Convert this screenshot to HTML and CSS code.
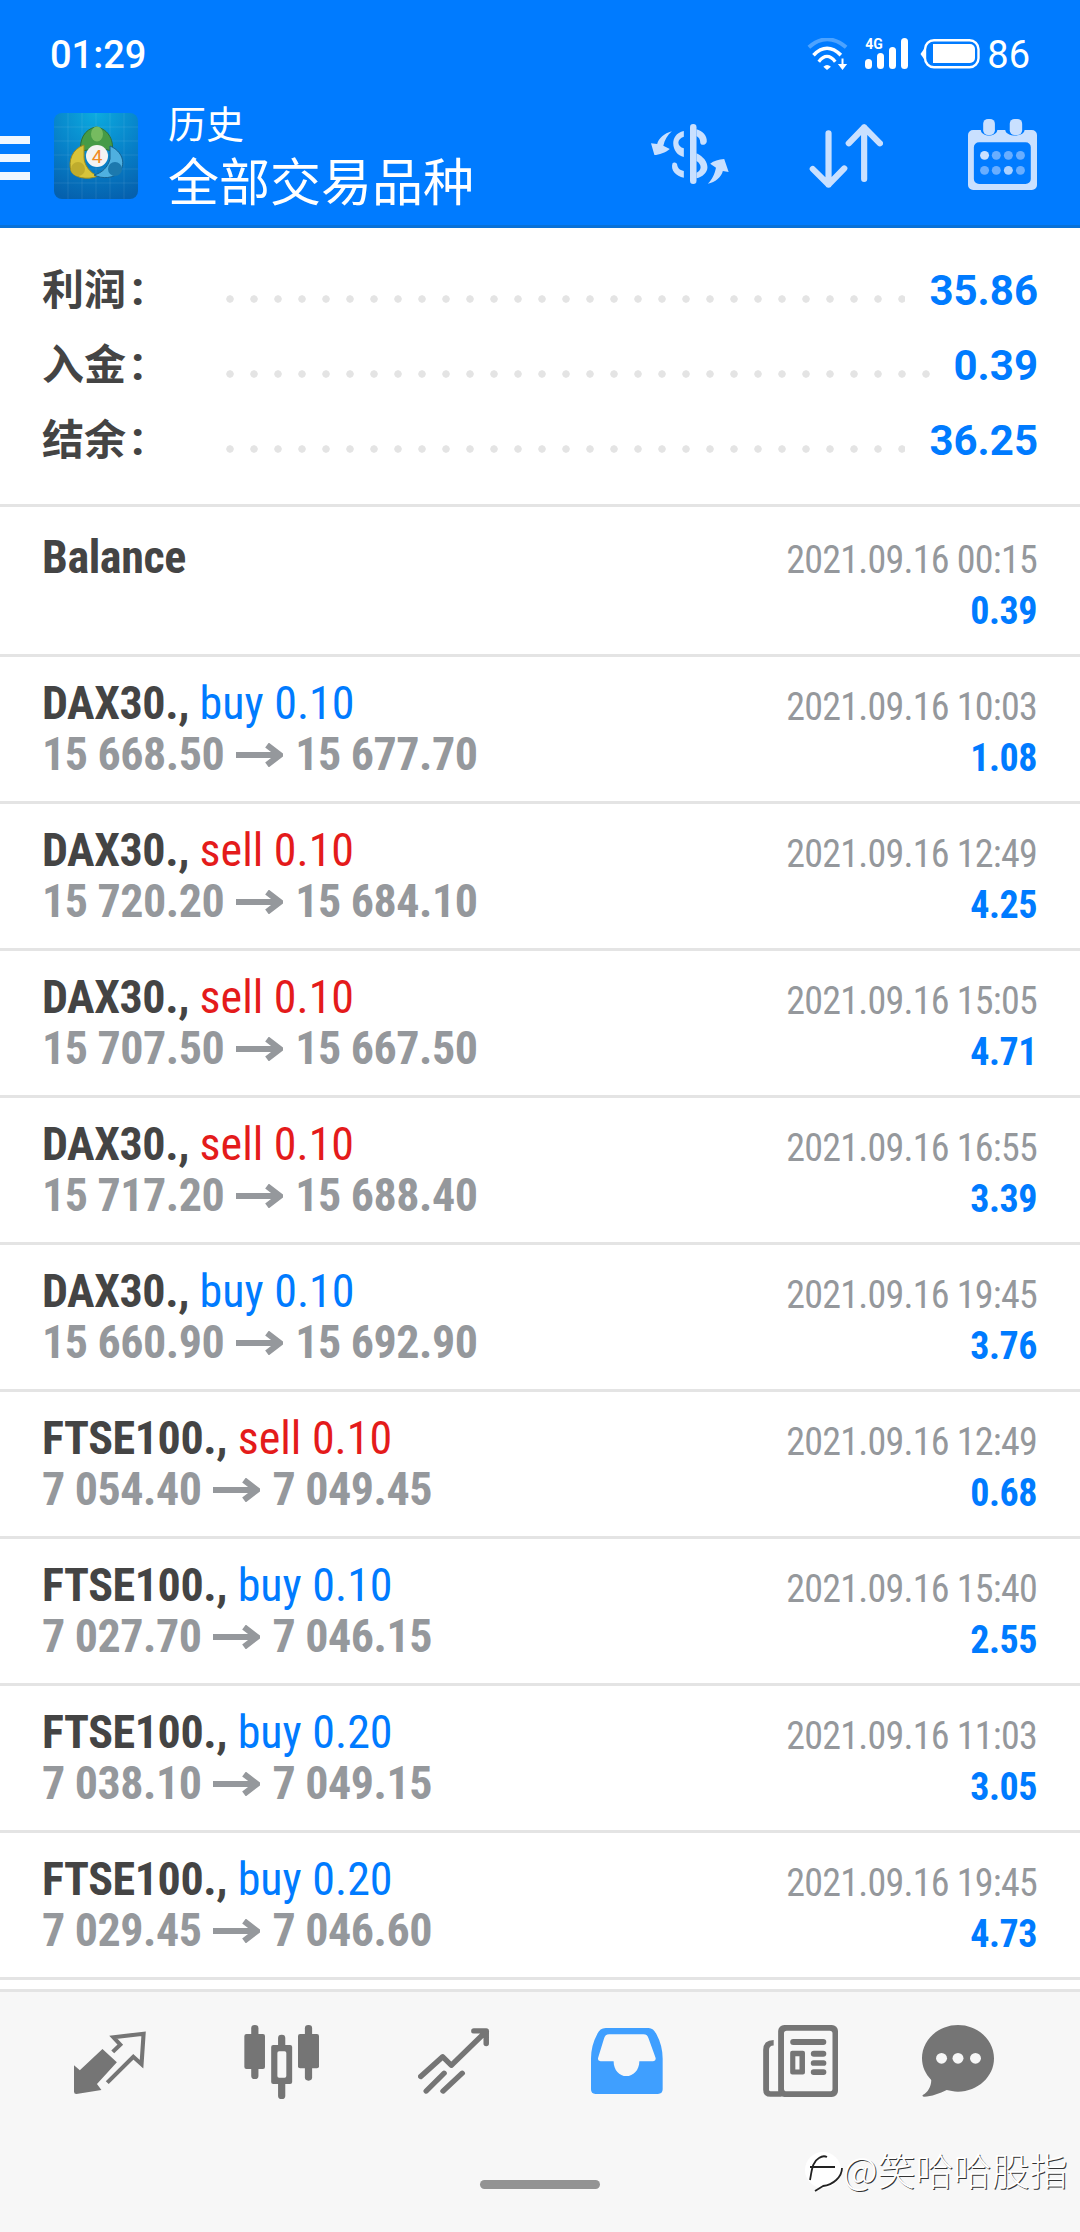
FILE: index.html
```html
<!DOCTYPE html>
<html lang="en">
<head>
    <meta charset="UTF-8">
    <title>历史</title>
    <link rel="stylesheet" href="styles.css">
</head>
<body>
<div class="screen">
    <header class="top">
        <div class="status">
            <span class="clock">01:29</span>
            <div class="status-right">
                <svg class="wifi" width="41" height="32" viewBox="35 38 123 97">
                    <path d="M40 66 Q95 18 153 66" fill="none" stroke="#fff" stroke-opacity=".3" stroke-width="12"/>
                    <path d="M54 90 Q95 48 137 90" fill="none" stroke="#fff" stroke-width="11"/>
                    <path d="M70 110 Q95 78 120 110" fill="none" stroke="#fff" stroke-width="10"/>
                    <path d="M84 125 Q95 114 107 125 L95 135Z" fill="#fff"/>
                    <path d="M139 100h6v17h11l-14 18-14-18h11z" fill="#fff"/>
                </svg>
                <div class="signal">
                    <span class="four-g">4G</span>
                    <svg width="44" height="32" viewBox="0 0 44 32">
                        <rect x="0" y="21" width="7" height="10" rx="3.500" fill="#fff"/>
                        <rect x="12" y="15" width="7" height="16" rx="3.500" fill="#fff"/>
                        <rect x="24" y="9" width="7" height="22" rx="3.500" fill="#fff"/>
                        <rect x="36" y="0" width="7" height="31" rx="3.500" fill="#fff"/>
                    </svg>
                </div>
                <svg class="battery" width="60" height="30" viewBox="0 0 60 30">
                    <path d="M4 10 L0.500 15 L4 20Z" fill="#fff"/>
                    <rect x="5" y="1.200" width="53.500" height="27" rx="9" fill="none" stroke="#fff" stroke-width="2.400"/>
                    <path d="M13 5 H50 a5 5 0 0 1 5 5 V19 a5 5 0 0 1 -5 5 H13Z" fill="#fff"/>
                </svg>
                <span class="level">86</span>
            </div>
        </div>
        <div class="appbar">
            <div class="burger"><i></i><i></i><i></i></div>
            <svg class="logo" width="84" height="86" viewBox="0 0 84 86">
                <defs>
                    <radialGradient id="logo-bg" cx="50%" cy="0%" r="105%">
                        <stop offset="0" stop-color="#0cabdf"/>
                        <stop offset=".55" stop-color="#0780c8"/>
                        <stop offset="1" stop-color="#0560ad"/>
                    </radialGradient>
                </defs>
                <rect width="84" height="86" rx="8" fill="url(#logo-bg)"/>
                <path d="M14 0V86M28 0V86M42 0V86M56 0V86M70 0V86M0 14H84M0 28H84M0 42H84M0 56H84M0 70H84" stroke="#fff" stroke-opacity=".09" stroke-width="1"/>
                <path d="M42 14 C56 16 60 30 58 38 L50 36 C47 33 37 33 34 37 L27 38 C25 28 30 16 42 14Z" fill="#469b46" stroke="#2f6f35" stroke-width="1"/>
                <ellipse cx="43" cy="21" rx="6" ry="7.500" fill="#76bb60"/>
                <path d="M30 32 C18 36 14 48 17 58 C20 64 32 68 44 63 C36 60 30 52 30 44Z" fill="#d8c43a" stroke="#9c8c1f" stroke-width="1"/>
                <circle cx="24" cy="56" r="7" fill="#bfac2d"/>
                <path d="M56 33 C68 38 72 50 66 58 C60 66 48 66 40 62 C48 60 54 54 56 46Z" fill="#4fb0e0" stroke="#17618f" stroke-width="1"/>
                <circle cx="61" cy="56" r="7" fill="#1c79ae"/>
                <circle cx="43" cy="43" r="11" fill="#f3f3f3"/>
                <text class="logo-num" x="43" y="50">4</text>
            </svg>
            <div class="titles">
                <div class="title-small">历史</div>
                <div class="title-big">全部交易品种</div>
            </div>
            <div class="actions">
                <svg class="act-dollar" width="78" height="60" viewBox="322 372 228 180" preserveAspectRatio="none">
                    <rect x="436" y="372" width="19" height="180" rx="9.500" fill="#c9e0ff"/>
                    <path d="M418 393 C395 398 387 415 387 430 C387 450 400 468 418 471 V445 C408 442 402 435 402 428 C402 420 408 413 418 410Z" fill="#c9e0ff"/>
                    <path d="M455 388 C472 392 487 408 485 425 C483 436 468 438 466 428 C466 418 462 412 455 408Z" fill="#c9e0ff"/>
                    <path d="M455 460 C475 470 487 485 487 502 C487 518 472 532 455 535Z M455 483 V518 C462 515 467 510 467 502 C467 495 463 488 455 483Z" fill="#c9e0ff" fill-rule="evenodd"/>
                    <path d="M385 490 C378 510 395 530 418 533 V513 C405 510 400 505 398 492 C395 487 388 486 385 490Z" fill="#c9e0ff"/>
                    <path d="M383 394 C360 400 345 415 340 432 L322 430 L332 465 C345 465 365 458 377 447 L358 437 C362 420 370 405 383 394Z" fill="#c9e0ff"/>
                    <path d="M488 551 C510 548 528 530 532 513 L549 516 L536 477 C520 478 505 483 495 491 L512 503 C508 522 500 540 488 551Z" fill="#c9e0ff"/>
                </svg>
                <svg class="act-sort" width="74" height="64" viewBox="780 370 216 192" preserveAspectRatio="none">
                    <path d="M837 398 V552 M791 505 L837 552 L883 503" fill="none" stroke="#c9e0ff" stroke-width="18" stroke-linecap="round" stroke-linejoin="round"/>
                    <path d="M941 535 V380 M896 428 L941 380 L987 428" fill="none" stroke="#c9e0ff" stroke-width="18" stroke-linecap="round" stroke-linejoin="round"/>
                </svg>
                <svg class="act-cal" width="69" height="71" viewBox="1243 357 200 213" preserveAspectRatio="none">
                    <path d="M1258 390 H1280 C1282 412 1326 412 1328 390 H1351 C1353 412 1405 412 1407 390 H1428 a15 15 0 0 1 15 15 V555 a15 15 0 0 1 -15 15 H1258 a15 15 0 0 1 -15 -15 V405 a15 15 0 0 1 15 -15Z M1275 427 a15 15 0 0 0 -15 15 V537 a15 15 0 0 0 15 15 H1410 a15 15 0 0 0 15 -15 V442 a15 15 0 0 0 -15 -15Z" fill="#c9e0ff" fill-rule="evenodd"/>
                    <rect x="1287" y="357" width="34" height="48" rx="14" fill="#c9e0ff"/>
                    <rect x="1364" y="357" width="36" height="48" rx="14" fill="#c9e0ff"/>
                    <circle cx="1291" cy="466" r="13" fill="#c9e0ff"/>
                    <circle cx="1325" cy="466" r="13" fill="#69aeff"/>
                    <circle cx="1360" cy="466" r="13" fill="#69aeff"/>
                    <circle cx="1395" cy="466" r="13" fill="#69aeff"/>
                    <circle cx="1291" cy="511" r="13" fill="#69aeff"/>
                    <circle cx="1325" cy="511" r="13" fill="#69aeff"/>
                    <circle cx="1360" cy="511" r="13" fill="#c9e0ff" fill-opacity=".85"/>
                    <circle cx="1395" cy="511" r="13" fill="#69aeff"/>
                </svg>
            </div>
        </div>
    </header>

    <section class="summary">
        <div class="sum-row"><span class="sum-label">利润<span class="colon">:</span></span><span class="dots"></span><span class="sum-val">35.86</span></div>
        <div class="sum-row"><span class="sum-label">入金<span class="colon">:</span></span><span class="dots"></span><span class="sum-val">0.39</span></div>
        <div class="sum-row"><span class="sum-label">结余<span class="colon">:</span></span><span class="dots"></span><span class="sum-val">36.25</span></div>
    </section>

    <div class="list">
        <div class="row row-balance">
            <div class="row-left"><span class="sym">Balance</span></div>
            <div class="row-right"><span class="when">2021.09.16 00:15</span><span class="pl">0.39</span></div>
        </div>
        <div class="row">
            <div class="row-left"><div><span class="sym">DAX30.,</span> <span class="buy">buy 0.10</span></div><div class="prices"><span>15 668.50</span><svg class="arr" width="47" height="24" viewBox="0 0 47 24"><path d="M0 12 H44 M31 2 L44 12 L31 22" fill="none" stroke="#95989c" stroke-width="6"/></svg><span>15 677.70</span></div></div>
            <div class="row-right"><span class="when">2021.09.16 10:03</span><span class="pl">1.08</span></div>
        </div>
        <div class="row">
            <div class="row-left"><div><span class="sym">DAX30.,</span> <span class="sell">sell 0.10</span></div><div class="prices"><span>15 720.20</span><svg class="arr" width="47" height="24" viewBox="0 0 47 24"><path d="M0 12 H44 M31 2 L44 12 L31 22" fill="none" stroke="#95989c" stroke-width="6"/></svg><span>15 684.10</span></div></div>
            <div class="row-right"><span class="when">2021.09.16 12:49</span><span class="pl">4.25</span></div>
        </div>
        <div class="row">
            <div class="row-left"><div><span class="sym">DAX30.,</span> <span class="sell">sell 0.10</span></div><div class="prices"><span>15 707.50</span><svg class="arr" width="47" height="24" viewBox="0 0 47 24"><path d="M0 12 H44 M31 2 L44 12 L31 22" fill="none" stroke="#95989c" stroke-width="6"/></svg><span>15 667.50</span></div></div>
            <div class="row-right"><span class="when">2021.09.16 15:05</span><span class="pl">4.71</span></div>
        </div>
        <div class="row">
            <div class="row-left"><div><span class="sym">DAX30.,</span> <span class="sell">sell 0.10</span></div><div class="prices"><span>15 717.20</span><svg class="arr" width="47" height="24" viewBox="0 0 47 24"><path d="M0 12 H44 M31 2 L44 12 L31 22" fill="none" stroke="#95989c" stroke-width="6"/></svg><span>15 688.40</span></div></div>
            <div class="row-right"><span class="when">2021.09.16 16:55</span><span class="pl">3.39</span></div>
        </div>
        <div class="row">
            <div class="row-left"><div><span class="sym">DAX30.,</span> <span class="buy">buy 0.10</span></div><div class="prices"><span>15 660.90</span><svg class="arr" width="47" height="24" viewBox="0 0 47 24"><path d="M0 12 H44 M31 2 L44 12 L31 22" fill="none" stroke="#95989c" stroke-width="6"/></svg><span>15 692.90</span></div></div>
            <div class="row-right"><span class="when">2021.09.16 19:45</span><span class="pl">3.76</span></div>
        </div>
        <div class="row">
            <div class="row-left"><div><span class="sym">FTSE100.,</span> <span class="sell">sell 0.10</span></div><div class="prices"><span>7 054.40</span><svg class="arr" width="47" height="24" viewBox="0 0 47 24"><path d="M0 12 H44 M31 2 L44 12 L31 22" fill="none" stroke="#95989c" stroke-width="6"/></svg><span>7 049.45</span></div></div>
            <div class="row-right"><span class="when">2021.09.16 12:49</span><span class="pl">0.68</span></div>
        </div>
        <div class="row">
            <div class="row-left"><div><span class="sym">FTSE100.,</span> <span class="buy">buy 0.10</span></div><div class="prices"><span>7 027.70</span><svg class="arr" width="47" height="24" viewBox="0 0 47 24"><path d="M0 12 H44 M31 2 L44 12 L31 22" fill="none" stroke="#95989c" stroke-width="6"/></svg><span>7 046.15</span></div></div>
            <div class="row-right"><span class="when">2021.09.16 15:40</span><span class="pl">2.55</span></div>
        </div>
        <div class="row">
            <div class="row-left"><div><span class="sym">FTSE100.,</span> <span class="buy">buy 0.20</span></div><div class="prices"><span>7 038.10</span><svg class="arr" width="47" height="24" viewBox="0 0 47 24"><path d="M0 12 H44 M31 2 L44 12 L31 22" fill="none" stroke="#95989c" stroke-width="6"/></svg><span>7 049.15</span></div></div>
            <div class="row-right"><span class="when">2021.09.16 11:03</span><span class="pl">3.05</span></div>
        </div>
        <div class="row">
            <div class="row-left"><div><span class="sym">FTSE100.,</span> <span class="buy">buy 0.20</span></div><div class="prices"><span>7 029.45</span><svg class="arr" width="47" height="24" viewBox="0 0 47 24"><path d="M0 12 H44 M31 2 L44 12 L31 22" fill="none" stroke="#95989c" stroke-width="6"/></svg><span>7 046.60</span></div></div>
            <div class="row-right"><span class="when">2021.09.16 19:45</span><span class="pl">4.73</span></div>
        </div>
    </div>

    <nav class="tabs">
        <div class="tab-icons">
            <svg class="tab-trade" width="72" height="63" viewBox="215 212 210 190" preserveAspectRatio="none">
                <path d="M215 315 L232 330 L298 266 L340 306 L282 372 L295 390 L222 402 Q215 402 215 395Z" fill="#757575"/>
                <path d="M328 275 L350 253 L330 231 L418 220 L412 312 L388 290 L312 368" fill="none" stroke="#757575" stroke-width="12"/>
            </svg>
            <svg class="tab-chart" width="75" height="74" viewBox="708 195 218 222" preserveAspectRatio="none">
                <rect x="729" y="195" width="21" height="162" rx="10" fill="#757575"/>
                <rect x="709" y="222" width="60" height="105" rx="6" fill="#757575"/>
                <rect x="807" y="224" width="21" height="193" rx="10" fill="#757575"/>
                <rect x="787" y="255" width="61" height="117" rx="6" fill="#757575"/>
                <rect x="805" y="274" width="26" height="79" rx="5" fill="#f7f7f7"/>
                <rect x="885" y="195" width="21" height="167" rx="10" fill="#757575"/>
                <rect x="865" y="222" width="61" height="103" rx="6" fill="#757575"/>
            </svg>
            <svg class="tab-trend" width="72" height="66" viewBox="1213 203 210 200" preserveAspectRatio="none">
                <path d="M1221 350 L1285 290 L1310 316 L1412 213 M1376 212 H1412 V250" fill="none" stroke="#757575" stroke-width="16" stroke-linecap="round" stroke-linejoin="round"/>
                <path d="M1237 394 L1289 340 M1286 394 L1342 340" fill="none" stroke="#757575" stroke-width="16" stroke-linecap="round"/>
            </svg>
            <svg class="tab-history" width="72" height="66" viewBox="147 203 210 199" preserveAspectRatio="none">
                <path d="M190 203 H315 C325 203 332 210 338 222 C350 245 356 270 356 295 V388 Q356 402 342 402 H160 Q147 402 147 388 V295 C147 270 153 245 165 222 C170 210 178 203 190 203Z M200 222 Q188 222 185 235 L168 292 Q165 303 175 303 H213 C213 330 230 348 250 348 C270 348 288 330 288 303 H328 Q338 303 335 292 L315 235 Q312 222 300 222Z" fill="#3f9fff" fill-rule="evenodd"/>
            </svg>
            <svg class="tab-news" width="75" height="72" viewBox="646 195 218 215" preserveAspectRatio="none">
                <path d="M708 195 H846 a18 18 0 0 1 18 18 V392 a18 18 0 0 1 -18 18 H708 a18 18 0 0 1 -18 -18 V213 a18 18 0 0 1 18 -18Z M715 212 a8 8 0 0 0 -8 8 V385 a8 8 0 0 0 8 8 H840 a8 8 0 0 0 8 -8 V220 a8 8 0 0 0 -8 -8Z" fill="#757575" fill-rule="evenodd"/>
                <path d="M677 248 Q655 248 655 270 V388 Q655 401 668 401 H700" fill="none" stroke="#757575" stroke-width="17"/>
                <rect x="725" y="237" width="105" height="18" rx="9" fill="#757575"/>
                <path d="M731 272 H762 a6 6 0 0 1 6 6 V337 a6 6 0 0 1 -6 6 H731 a6 6 0 0 1 -6 -6 V278 a6 6 0 0 1 6 -6Z M740 288 V328 H752 V288Z" fill="#757575" fill-rule="evenodd"/>
                <rect x="785" y="272" width="45" height="18" rx="9" fill="#757575"/>
                <rect x="785" y="300" width="45" height="17" rx="8" fill="#757575"/>
                <rect x="785" y="327" width="45" height="17" rx="8" fill="#757575"/>
            </svg>
            <svg class="tab-chat" width="72" height="72" viewBox="1108 195 210 216" preserveAspectRatio="none">
                <path d="M1213 195 C1271 195 1318 240 1318 295 C1318 350 1271 395 1213 395 C1200 395 1190 392 1180 390 C1160 400 1135 410 1115 410 Q1108 410 1110 405 C1125 398 1135 380 1135 360 C1118 342 1108 320 1108 295 C1108 240 1155 195 1213 195Z" fill="#757575"/>
                <circle cx="1165" cy="295" r="16" fill="#f7f7f7"/>
                <circle cx="1213" cy="295" r="16" fill="#f7f7f7"/>
                <circle cx="1264" cy="295" r="16" fill="#f7f7f7"/>
            </svg>
        </div>
        <div class="handle"></div>
        <div class="mark">
            <svg width="38" height="40" viewBox="0 0 38 40">
                <circle cx="18" cy="18" r="18" fill="#fff"/>
                <path d="M12 36 L8 40 L20 34Z" fill="#fff"/>
                <path d="M5 28 C7 18 7 10 14 6 C17 4 20 4 22 5 M5 15 H30 M37 16 C37 25 28 33 18 34 L10 39" fill="none" stroke="#222" stroke-width="1.800"/>
            </svg>
            <span class="mark-text">@笑哈哈股指</span>
        </div>
    </nav>
</div>
</body>
</html>
```

FILE: styles.css
```css
* {
    box-sizing: border-box;
}

html, body {
    margin: 0;
    padding: 0;
}

body {
    font-family: Roboto, "Noto Sans CJK SC", sans-serif;
    background: #fff;
}

svg {
    display: block;
    flex: none;
}

.screen {
    width: 1080px;
    height: 2232px;
    display: flex;
    flex-direction: column;
    overflow: hidden;
}

/* top blue part */
.top {
    height: 228px;
    background: #007bff;
    border-bottom: 3px solid #0871d8;
    color: #fff;
    flex: none;
}

.status {
    height: 100px;
    padding: 32px 50px 0 50px;
    display: flex;
    justify-content: space-between;
    align-items: flex-start;
}

.clock {
    font-size: 38px;
    font-weight: 500;
    line-height: 46px;
}

.status-right {
    display: flex;
    align-items: flex-start;
    margin-top: 6px;
}

.wifi {
    margin-right: 17px;
}

.signal {
    position: relative;
    width: 44px;
    height: 32px;
    margin-right: 11px;
}

.four-g {
    position: absolute;
    left: 0;
    top: 0;
    font-size: 14px;
    font-weight: 700;
    line-height: 12px;
}

.battery {
    margin: 1px 7px 0 0;
}

.level {
    font-size: 38px;
    line-height: 34px;
}

.appbar {
    height: 125px;
    padding-right: 43px;
    display: flex;
    align-items: flex-start;
}

.burger {
    width: 30px;
    margin-top: 36px;
    display: flex;
    flex-direction: column;
    gap: 10px;
}

.burger i {
    display: block;
    height: 8px;
    background: #f0f7ff;
}

.logo {
    margin: 13px 0 0 24px;
}

.titles {
    margin: 0 0 0 30px;
    font-family: "Noto Sans CJK SC", sans-serif;
}

.title-small {
    font-size: 38px;
    line-height: 43px;
}

.title-big {
    font-size: 51px;
    line-height: 62px;
    margin-top: 5px;
}

.actions {
    margin-left: auto;
    display: flex;
    align-items: flex-start;
}

.act-dollar {
    margin-top: 24px;
}

.act-sort {
    margin: 24px 0 0 80px;
}

.act-cal {
    margin: 19px 0 0 85px;
}

.logo-num {
    font-size: 19px;
    font-family: Roboto, sans-serif;
    fill: #f08a24;
    text-anchor: middle;
}

/* summary */
.summary {
    height: 276px;
    padding-top: 25px;
    flex: none;
}

.sum-row {
    height: 75px;
    padding: 0 42px;
    display: flex;
    align-items: center;
}

.sum-label {
    width: 176px;
    flex: none;
    font-size: 42px;
    font-weight: 700;
    color: #444;
    margin-bottom: 9px;
}

.colon {
    font-size: 48px;
    line-height: 1;
    margin-left: 5px;
}

.dots {
    flex: 1;
    height: 8px;
    margin: 17px 24px 0 0;
    background-image: radial-gradient(circle, #e4e4e4 3.400px, transparent 4px);
    background-size: 24px 8px;
    background-repeat: repeat-x;
}

.sum-val {
    font-size: 42px;
    font-weight: 700;
    color: #007bff;
}

/* deal list */
.list {
    flex: 1;
    border-top: 3px solid #e4e4e4;
}

.row {
    height: 147px;
    padding: 0 42px;
    border-bottom: 3px solid #e4e4e4;
    display: flex;
    justify-content: space-between;
    font-stretch: condensed;
}

.row-balance {
    height: 150px;
}

.row-left {
    padding-top: 21px;
    font-size: 46px;
    line-height: 51px;
}

.row-balance .row-left {
    padding-top: 25px;
}

.row-right {
    padding-top: 25px;
    margin-right: 1px;
    display: flex;
    flex-direction: column;
    align-items: flex-end;
}

.row-balance .row-right {
    padding-top: 28px;
}

.sym {
    font-weight: 700;
    color: #444;
    letter-spacing: -0.400px;
}

.buy {
    color: #007bff;
}

.sell {
    color: #e41b1b;
}

.prices {
    display: flex;
    align-items: center;
    color: #95989c;
    font-weight: 700;
    letter-spacing: -0.500px;
}

.arr {
    margin: 0 12px;
}

.when {
    font-size: 38px;
    letter-spacing: -0.750px;
    line-height: 51px;
    color: #95989c;
}

.pl {
    font-size: 38px;
    letter-spacing: -0.500px;
    line-height: 50px;
    font-weight: 700;
    color: #007bff;
}

/* bottom tabs */
.tabs {
    height: 243px;
    flex: none;
    background: #f7f7f7;
    border-top: 3px solid #e4e4e4;
    position: relative;
}

.tab-icons {
    height: 188px;
    display: flex;
    align-items: flex-start;
    padding: 33px 0 0 74px;
}

.tab-trade {
    margin-top: 6px;
}

.tab-chart {
    margin-left: 98px;
}

.tab-trend {
    margin: 3px 0 0 99px;
}

.tab-history {
    margin: 3px 0 0 101px;
}

.tab-news {
    margin-left: 100px;
}

.tab-chat {
    margin-left: 84px;
}

.handle {
    width: 120px;
    height: 9px;
    margin: 0 auto;
    border-radius: 5px;
    background: #939393;
}

/* watermark over the bar */
.mark {
    position: absolute;
    left: 805px;
    top: 160px;
    display: flex;
    align-items: flex-start;
}

.mark-text {
    font-size: 38px;
    line-height: 48px;
    margin: -7px 0 0 0;
    font-family: "Noto Sans CJK SC", sans-serif;
    font-weight: 300;
    color: #fff;
    text-shadow: 1px 1px 0 #333;
}
```
